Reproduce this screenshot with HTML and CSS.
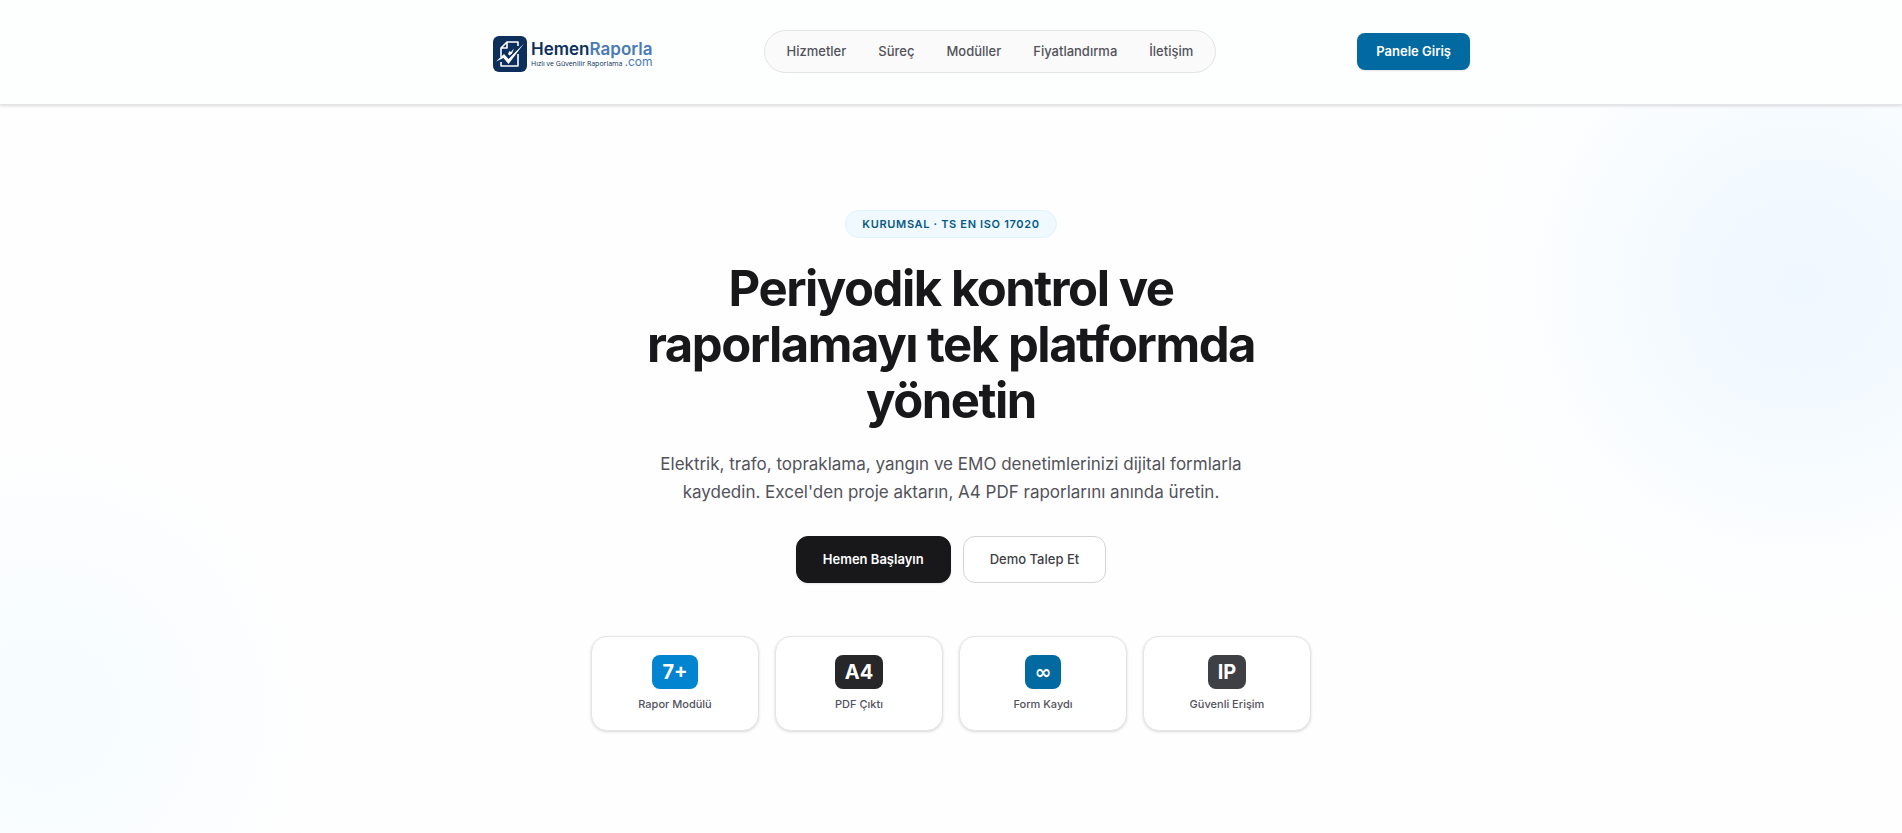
FILE: index.html
```html
<!DOCTYPE html>
<html lang="tr">
<head>
    <meta charset="UTF-8">
    <title>HemenRaporla</title>
    <meta name="viewport" content="width=device-width, initial-scale=1.0">
    <link rel="stylesheet" href="styles.css">
</head>
<body>

<header class="header">
    <div class="header-inner">
        <a class="logo" href="#">
            <svg class="logo-mark" viewBox="0 0 34 36" aria-hidden="true">
                <rect width="34" height="36" rx="6" fill="#0c2f5b"/>
                <path d="M25 10V6H14L8 12v9M14 6v6H8M8 26v4h17V18" fill="none" stroke="#fff" stroke-width="1.6" stroke-linejoin="round"/>
                <path d="M3 25.500 11 18l4.500 5L31 7.500 15.500 28 10.500 22z" fill="#fff"/>
                <path d="m15 18 1.500-3 1.500 1 3-3.500-2 5-2.500 2z" fill="#fff"/>
            </svg>
            <span class="logo-text">
                <span class="logo-name">Hemen<span class="logo-accent">Raporla</span></span>
                <span class="logo-sub"><span>Hızlı ve Güvenilir Raporlama</span><span class="logo-com">.com</span></span>
            </span>
        </a>
        <nav class="nav">
            <a href="#hizmetler">Hizmetler</a>
            <a href="#surec">Süreç</a>
            <a href="#moduller">Modüller</a>
            <a href="#fiyat">Fiyatlandırma</a>
            <a href="#iletisim">İletişim</a>
        </nav>
        <a class="btn-login" href="#giris">Panele Giriş</a>
    </div>
</header>

<main class="hero">
    <span class="badge">KURUMSAL · TS EN ISO 17020</span>
    <h1 class="title">Periyodik kontrol ve raporlamayı tek platformda yönetin</h1>
    <p class="lead">Elektrik, trafo, topraklama, yangın ve EMO denetimlerinizi dijital formlarla kaydedin. Excel'den proje aktarın, A4 PDF raporlarını anında üretin.</p>
    <div class="actions">
        <a class="btn btn-dark" href="#basla">Hemen Başlayın</a>
        <a class="btn btn-light" href="#demo">Demo Talep Et</a>
    </div>
    <div class="stats">
        <div class="stat">
            <span class="stat-value blue">7+</span>
            <span class="stat-label">Rapor Modülü</span>
        </div>
        <div class="stat">
            <span class="stat-value black">A4</span>
            <span class="stat-label">PDF Çıktı</span>
        </div>
        <div class="stat">
            <span class="stat-value navy symbol">∞</span>
            <span class="stat-label">Form Kaydı</span>
        </div>
        <div class="stat">
            <span class="stat-value gray">IP</span>
            <span class="stat-label">Güvenli Erişim</span>
        </div>
    </div>
</main>

</body>
</html>
```
FILE: styles.css
```css
* {
    box-sizing: border-box;
}
body {
    margin: 0;
    min-height: 100vh;
    display: flex;
    flex-direction: column;
    font-family: Inter, "Liberation Sans", sans-serif;
    color: #18181b;
    background: #fefefe;
}
a {
    text-decoration: none;
}

/* header */
.header {
    padding: 30px 24px 31px;
    background: #fdfefe;
    border-bottom: 1px solid #e4e4e7;
    box-shadow: 0 1px 3px rgba(0, 0, 0, 0.15);
    z-index: 1;
}
.header-inner {
    display: flex;
    align-items: center;
    max-width: 1038px;
    margin: 0 auto;
}
.logo {
    display: flex;
    align-items: center;
    gap: 4px;
    margin-left: 61px;
    padding-top: 4px;
}
.logo-mark {
    width: 34px;
    height: 36px;
}
.logo-text {
    display: flex;
    flex-direction: column;
    padding-top: 2px;
    color: #0c2f5b;
}
.logo-name {
    font-size: 17px;
    line-height: 17px;
    font-weight: 600;
}
.logo-accent {
    color: #4a7ab5;
}
.logo-sub {
    display: flex;
    align-items: baseline;
    justify-content: space-between;
    font-family: "Open Sans", sans-serif;
    font-size: 7px;
    line-height: 8px;
    font-weight: 500;
}
.logo-com {
    font-family: Inter, sans-serif;
    font-size: 12px;
    font-weight: 400;
    color: #4a7ab5;
}
.nav {
    display: flex;
    margin-left: auto;
    margin-right: 141px;
    padding: 4px 6px;
    border: 1px solid #e4e4e7;
    border-radius: 22px;
    background: #fafafa;
}
.nav a {
    padding: 6px 16px;
    font-size: 13px;
    line-height: 21px;
    font-weight: 500;
    color: #52525b;
}
.btn-login {
    padding: 8px 19px;
    border-radius: 8px;
    background: #0369a1;
    box-shadow: 0 1px 2px rgba(0, 0, 0, 0.1);
    color: #fff;
    font-size: 13px;
    line-height: 21px;
    font-weight: 600;
}

/* hero */
.hero {
    flex: 1;
    display: flex;
    flex-direction: column;
    align-items: center;
    padding: 105px 24px 96px;
    text-align: center;
    background:
        radial-gradient(circle 370px at calc(100% - 102px) 180px, #f0f8ff, #f2f9ff 28%, #f8fcff 56%, #fdfeff 78%, transparent),
        radial-gradient(circle 300px at 45px 608px, #f6fcff, #f8fdff 35%, #fcfdff 60%, transparent);
}
.badge {
    padding: 4px 16px;
    border: 1px solid #e0f2fe;
    border-radius: 14px;
    background: #f0f9ff;
    color: #075985;
    font-size: 11px;
    line-height: 18px;
    font-weight: 600;
    letter-spacing: 0.06em;
}
.title {
    max-width: 720px;
    margin: 23px 0 0;
    font-size: 49px;
    line-height: 56px;
    font-weight: 700;
    letter-spacing: -0.03em;
}
.lead {
    max-width: 600px;
    margin: 21px 0 0;
    font-size: 17px;
    line-height: 28px;
    color: #52525b;
}
.actions {
    display: flex;
    gap: 12px;
    margin-top: 30px;
}
.btn {
    padding: 11px 26px;
    border: 1px solid #18181b;
    border-radius: 12px;
    font-size: 13px;
    line-height: 23px;
}
.btn-dark {
    background: #18181b;
    box-shadow: 0 1px 2px rgba(0, 0, 0, 0.1);
    color: #fff;
    font-weight: 600;
}
.btn-light {
    border-color: #d4d4d8;
    background: #fff;
    color: #3f3f46;
    font-weight: 500;
}
.stats {
    display: grid;
    grid-template-columns: repeat(4, 1fr);
    gap: 16px;
    width: 100%;
    max-width: 720px;
    margin-top: 53px;
}
.stat {
    display: flex;
    flex-direction: column;
    align-items: center;
    padding: 18px 16px 17px;
    border: 1px solid #e4e4e7;
    border-radius: 16px;
    background: #fff;
    box-shadow: 0 1px 3px rgba(0, 0, 0, 0.15);
}
.stat-value {
    padding: 5px 10px;
    border-radius: 8px;
    color: #fff;
    font-size: 20px;
    line-height: 24px;
    font-weight: 700;
}
.symbol {
    font-family: "DejaVu Sans", sans-serif;
}
.blue {
    background: #0284d0;
}
.black {
    background: #27272a;
}
.navy {
    background: #0369a1;
}
.gray {
    background: #3f3f46;
}
.stat-label {
    margin-top: 6px;
    font-size: 11px;
    line-height: 18px;
    font-weight: 500;
    color: #52525b;
}
```
